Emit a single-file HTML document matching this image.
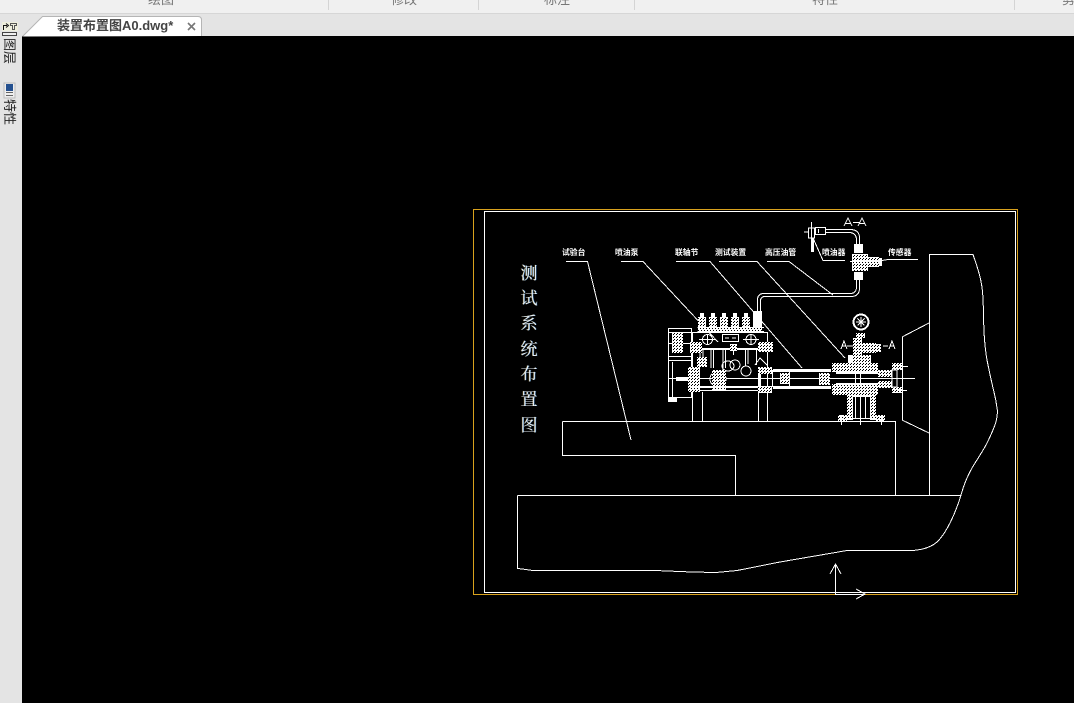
<!DOCTYPE html>
<html><head><meta charset="utf-8"><style>
html,body{margin:0;padding:0;background:#000;width:1074px;height:703px;overflow:hidden}
.a{position:absolute}
.tt{font:13px "Liberation Sans","Noto Sans CJK SC",sans-serif;color:#777;top:-9px;line-height:18px;white-space:nowrap}
.sep{top:0;width:1px;height:10px;background:#d4d4d4}
.r{font:13px/14px "Noto Sans CJK SC",sans-serif;color:#222;transform:rotate(90deg);transform-origin:0 0;white-space:nowrap}
.v{left:520px;width:18px;text-align:center;font:17px/18px "Noto Serif CJK SC",serif;color:#e6eef6;text-shadow:-.5px 0 0 rgba(255,210,90,.45),.5px 0 0 rgba(80,170,255,.65)}
svg text{fill:#fff}
</style></head><body>
<div class="a" style="left:0;top:0;width:1074px;height:13px;background:#f0f0f0"></div>
<div class="a" style="left:0;top:13px;width:1074px;height:1px;background:#d6d6d6"></div>
<div class="a" style="left:0;top:14px;width:1074px;height:22px;background:#e4e4e4"></div>
<div class="a" style="left:0;top:36px;width:22px;height:667px;background:#e4e4e4"></div>
<div class="a sep" style="left:328px"></div><div class="a sep" style="left:478px"></div><div class="a sep" style="left:634px"></div><div class="a sep" style="left:1014px"></div>
<div class="a tt" style="left:148px">绘图</div><div class="a tt" style="left:391px">修改</div><div class="a tt" style="left:544px">标注</div><div class="a tt" style="left:812px">特性</div><div class="a tt" style="left:1062px">剪贴板</div>
<svg class="a" style="left:0;top:0" width="205" height="37">
<path d="M22.500 36.500L42.500 16.500H198Q201.500 16.500 201.500 20V36" fill="#fff" stroke="#b5b5b5"/>
<path d="M188 23l7 7m0-7l-7 7" stroke="#777" stroke-width="1.600" fill="none"/>
</svg>
<div class="a" style="left:57px;top:17px;font:bold 13px/18px 'Liberation Sans','Noto Sans CJK SC',sans-serif;color:#444;white-space:nowrap">装置布置图A0.dwg*</div>
<svg class="a" style="left:0;top:0" width="22" height="100">
<rect x="2" y="22" width="16" height="9" fill="#eeeedd"/>
<path d="M3.500 30V25.500H7M6 23.500l2.500 2-2.500 2" stroke="#111" fill="none"/><path d="M10.500 23.500h6v2h-2v4h-2v-4h-2z" fill="none" stroke="#555"/>
<rect x="2.500" y="32.500" width="14" height="3" fill="#eee" stroke="#444"/>
<rect x="4" y="83" width="11" height="15" fill="#eee" stroke="#bbb"/><rect x="6" y="84" width="7" height="7" fill="#24508f"/><rect x="6" y="92" width="7" height="1" fill="#666"/><rect x="6" y="95" width="7" height="1" fill="#666"/>
</svg>
<div class="a r" style="left:17px;top:38px">图层</div>
<div class="a r" style="left:17px;top:99px">特性</div>

<svg class="a" style="left:0;top:0" width="1074" height="703" viewBox="0 0 1074 703" shape-rendering="crispEdges">
<defs>
<pattern id="h" width="3" height="3" patternUnits="userSpaceOnUse"><rect width="3" height="3" fill="#fff"/><rect x="1" y="1" width="1" height="1" fill="#000"/><rect x="2" y="0" width="1" height="1" fill="#000"/></pattern>
</defs>
<path d="M473.500 594V209.500H1017.500V594.500" fill="none" stroke="#fff"/>
<path d="M473 209.500H1018M473.500 209V594M1017.500 209V595M473 594.500H1018" fill="none" stroke="#d9a21d"/>
<rect x="484.500" y="211.500" width="531" height="381" fill="none" stroke="#fff"/>
<g fill="none" stroke="#fff">
<path d="M562.500 421.500H895.500V495M562.500 421.500V455.500H735.500V495.500"/>
<path d="M517.500 495.500H961M517.500 495.500V568.500L522 569L533 570.500H655L692 572L716 572.500L737 570.500L780 562L847 550.500H913C925 549.500 933 546 938 541C946 533 955 515 961 495C964 484 968 475 972 468C978 458 983 451 987 443C991 435 994 428 996 422C997.500 415 997.500 410 997 408C996 400 995 396 994 392C991 380 989 370 987 360C985 349 984.500 340 984 332C983.500 320 983.500 310 983 298C982.500 288 981 280 979 273C977 266 975 260 973 254.500H929.500V495.500"/>
<path d="M902 337L929 323M902.500 337V420M902 420L929 433"/>
<path d="M835.500 564V594.500H865M830 574L835.500 564L841 574M856 589L865 594L856 599"/>
<path d="M566 261.500H587.500L631 440M621 261.500H643L718 342M676 261.500H710L802 368M719 261.500H757L845 358M767 261.500H789L833 295M813 238L823 260.500H845M888 259.500H918M882 260.500L888 259.500"/>
<path d="M757.500 314V300Q757.500 293.500 764 293.500H850Q856.500 293.500 856.500 287V280M760.500 314V301Q760.500 296.500 765 296.500H851Q859.500 296.500 859.500 288V280M825 229.500H850Q859.500 229.500 859.500 238V245M825 232.500H849Q856.500 232.500 856.500 240V245"/>
<path d="M808.500 228H814.500V238H808.500ZM811.500 222V240M804 232H808M815.500 227.500H825.500V234.500H815.500ZM818.500 229V233"/>
<path d="M812.500 238V252" stroke-width="3"/>
<path d="M844 226L848 218L852 226M845 223.500H851M853 222.500H860M858 226L862 218L866 226M859 223.500H865"/>
<path d="M841 349L844 341L847 349M842 346H846M889 349L892 341L895 349M890 346H894M847 346H853M883 346H888"/>
<path d="M692.500 378V421M702.500 392V421M758.500 392V421M767.500 392V421M668 378.500H915"/>
</g>
<!-- valve -->
<g fill="#fff">
<rect x="854" y="244" width="9" height="9"/><rect x="854" y="272" width="9" height="8"/>
<rect x="852" y="254" width="16" height="17" fill="url(#h)"/>
<rect x="868" y="257" width="11" height="10" fill="url(#h)"/><rect x="879" y="258" width="3" height="8"/>
<rect x="850" y="261" width="32" height="1"/>
</g>
<!-- engine outlines -->
<g fill="none" stroke="#fff">
<path d="M668.500 328.500H691.500V397.500H668.500ZM668.500 332.500H691M668.500 343.500H691M668.500 356.500H691M668.500 360.500H691M672.500 362V397"/>
<rect x="692.500" y="332.500" width="75" height="58"/>
<path d="M697.500 327.500H764M697.500 331.500H764M692 386.500H767"/>
<rect x="722.500" y="334.500" width="16" height="7"/>
<path d="M725 338H729M732 338H736"/>
<circle cx="707.500" cy="339.500" r="5"/><circle cx="751" cy="339.500" r="5"/><path d="M699 339.500H716M743 339.500H759M707.500 334V345M751 334V345"/>
<path d="M711 349V368M713.500 349V368M723 349V370M725.500 349V368M733.500 349V355M745.500 349V366M748 349V364M756.500 349V365M700 349V358M703 349V358"/>
<ellipse cx="728" cy="366" rx="6" ry="5"/><circle cx="735" cy="365" r="5"/><circle cx="746" cy="371" r="5"/><circle cx="718" cy="379" r="8"/>
<circle cx="702" cy="362" r="4"/>
<path d="M755 365L760 358L768 366"/>
<rect x="772.500" y="370.500" width="17" height="16"/>
</g>
<g fill="#fff">
<rect x="692" y="348" width="76" height="2"/>
<rect x="668" y="398" width="9" height="4"/>
<rect x="698" y="317" width="8" height="10" fill="url(#h)"/><rect x="709" y="317" width="8" height="10" fill="url(#h)"/><rect x="720" y="317" width="8" height="10" fill="url(#h)"/><rect x="731" y="317" width="8" height="10" fill="url(#h)"/><rect x="742" y="317" width="8" height="10" fill="url(#h)"/>
<rect x="700" y="313" width="4" height="4"/><rect x="711" y="313" width="4" height="4"/><rect x="722" y="313" width="4" height="4"/><rect x="733" y="313" width="4" height="4"/><rect x="744" y="313" width="4" height="4"/>
<rect x="698" y="328" width="64" height="3" fill="url(#h)"/>
<rect x="753" y="311" width="9" height="16"/>
<rect x="672" y="333" width="11" height="20" fill="url(#h)"/>
<rect x="690" y="342" width="12" height="11" fill="url(#h)"/>
<rect x="697" y="357" width="10" height="10" fill="url(#h)"/>
<rect x="712" y="370" width="14" height="20" fill="url(#h)"/>
<rect x="688" y="367" width="12" height="25" fill="url(#h)"/>
<rect x="676" y="377" width="12" height="4"/>
<rect x="730" y="344" width="7" height="7" fill="url(#h)"/>
<rect x="758" y="342" width="15" height="10" fill="url(#h)"/>
<rect x="758" y="367" width="14" height="7" fill="url(#h)"/><rect x="758" y="386" width="14" height="7" fill="url(#h)"/>
<rect x="758" y="374" width="3" height="12"/>
<rect x="692" y="386" width="66" height="2"/>
<rect x="773" y="369" width="58" height="3"/><rect x="773" y="386" width="58" height="3"/>
<rect x="780" y="373" width="9" height="11" fill="url(#h)"/><rect x="819" y="373" width="11" height="12" fill="url(#h)"/>
<!-- test unit -->
<rect x="832" y="363" width="46" height="9" fill="url(#h)"/><rect x="832" y="384" width="46" height="11" fill="url(#h)"/>
<rect x="836" y="372" width="42" height="2"/><rect x="836" y="383" width="42" height="2"/>
<rect x="855" y="372" width="1" height="12"/><rect x="860" y="372" width="1" height="12"/>
<rect x="848" y="355" width="9" height="8"/><rect x="859" y="355" width="12" height="8" fill="url(#h)"/>
<rect x="853" y="338" width="9" height="25" fill="url(#h)"/>
<rect x="862" y="343" width="14" height="10" fill="url(#h)"/><rect x="876" y="344" width="5" height="8" fill="url(#h)"/>
<rect x="856" y="333" width="9" height="5" fill="url(#h)"/>
<rect x="878" y="370" width="14" height="7" fill="url(#h)"/><rect x="878" y="381" width="14" height="7" fill="url(#h)"/>
<rect x="892" y="363" width="10" height="7" fill="url(#h)"/><rect x="892" y="387" width="10" height="6" fill="url(#h)"/>
<rect x="892" y="370" width="5" height="17" fill="none" stroke="#fff"/>
<rect x="847" y="394" width="6" height="26" fill="url(#h)"/><rect x="870" y="394" width="6" height="26" fill="url(#h)"/>
<rect x="853" y="395" width="17" height="2"/>
<rect x="838" y="415" width="9" height="6" fill="url(#h)"/><rect x="876" y="415" width="9" height="6" fill="url(#h)"/>
<rect x="847" y="418" width="29" height="1"/>
</g>
<g fill="none" stroke="#fff">
<path d="M901 366.500H908M899 390.500H907M860.500 395V425M855.500 397V418M865.500 397V418M841.500 415V425M881.500 415V425"/>
<circle cx="861" cy="322" r="7.500" stroke-width="2"/><path d="M861 317V327M856 322H866M857.500 318.500L864.500 325.500M864.500 318.500L857.500 325.500"/>
</g>
<g font-family="'Noto Sans CJK SC',sans-serif" font-weight="700" style="font-size:7.800px" shape-rendering="auto">
<text x="562" y="255">试验台</text>
<text x="615" y="255">喷油泵</text>
<text x="675" y="255">联轴节</text>
<text x="715" y="255">测试装置</text>
<text x="765" y="255">高压油管</text>
<text x="822" y="255">喷油器</text>
<text x="888" y="255">传感器</text>
</g>
</svg>
<div class="a v" style="top:263px">测</div><div class="a v" style="top:288px">试</div><div class="a v" style="top:313px">系</div><div class="a v" style="top:339px">统</div><div class="a v" style="top:364px">布</div><div class="a v" style="top:389px">置</div><div class="a v" style="top:415px">图</div>
</body></html>
